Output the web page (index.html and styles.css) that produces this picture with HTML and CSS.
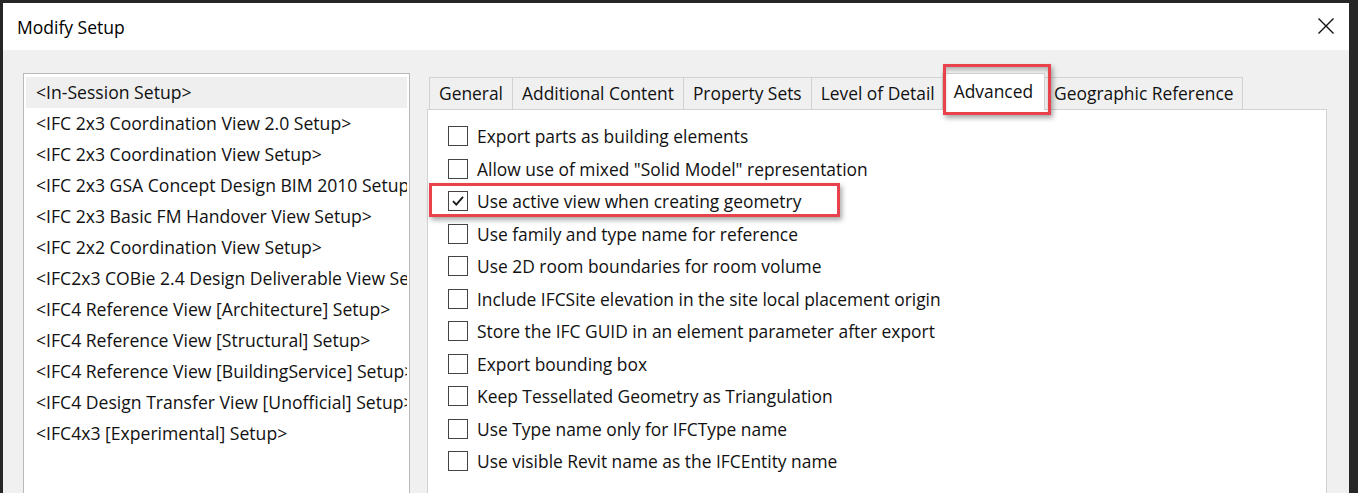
FILE: index.html
```html
<!DOCTYPE html>
<html>
<head>
<meta charset="utf-8">
<title>Modify Setup</title>
<link rel="stylesheet" href="styles.css">
</head>
<body>
<div class="window">
  <div class="titlebar">
    <span class="title">Modify Setup</span>
    <span class="close" aria-label="Close">
      <svg width="18" height="18" viewBox="0 0 18 18"><path d="M1.5 1.5 L16.5 16.5 M16.5 1.5 L1.5 16.5" stroke="#111" stroke-width="1.4" fill="none"/></svg>
    </span>
  </div>
  <div class="content">
    <div class="setup-list">
      <div class="item selected">&lt;In-Session Setup&gt;</div>
      <div class="item">&lt;IFC 2x3 Coordination View 2.0 Setup&gt;</div>
      <div class="item">&lt;IFC 2x3 Coordination View Setup&gt;</div>
      <div class="item">&lt;IFC 2x3 GSA Concept Design BIM 2010 Setup&gt;</div>
      <div class="item">&lt;IFC 2x3 Basic FM Handover View Setup&gt;</div>
      <div class="item">&lt;IFC 2x2 Coordination View Setup&gt;</div>
      <div class="item">&lt;IFC2x3 COBie 2.4 Design Deliverable View Setup&gt;</div>
      <div class="item">&lt;IFC4 Reference View [Architecture] Setup&gt;</div>
      <div class="item">&lt;IFC4 Reference View [Structural] Setup&gt;</div>
      <div class="item">&lt;IFC4 Reference View [BuildingService] Setup&gt;</div>
      <div class="item">&lt;IFC4 Design Transfer View [Unofficial] Setup&gt;</div>
      <div class="item">&lt;IFC4x3 [Experimental] Setup&gt;</div>
    </div>
    <div class="tabs-area">
      <div class="tabstrip">
        <div class="tab">General</div>
        <div class="tab">Additional Content</div>
        <div class="tab">Property Sets</div>
        <div class="tab">Level of Detail</div>
        <div class="tab active">Advanced<span class="highlight hl-tab"></span></div>
        <div class="tab">Geographic Reference</div>
      </div>
      <div class="panel">
        <div class="row"><span class="box"></span><span class="label">Export parts as building elements</span></div>
        <div class="row"><span class="box"></span><span class="label">Allow use of mixed "Solid Model" representation</span></div>
        <div class="row marked"><span class="box checked"><svg width="14" height="14" viewBox="0 0 14 14"><path d="M2 7.2 L5.3 10.6 L12 2.8" stroke="#1a1a1a" stroke-width="1.9" fill="none"/></svg></span><span class="label">Use active view when creating geometry</span><span class="highlight hl-row"></span></div>
        <div class="row"><span class="box"></span><span class="label">Use family and type name for reference</span></div>
        <div class="row"><span class="box"></span><span class="label">Use 2D room boundaries for room volume</span></div>
        <div class="row"><span class="box"></span><span class="label">Include IFCSite elevation in the site local placement origin</span></div>
        <div class="row"><span class="box"></span><span class="label">Store the IFC GUID in an element parameter after export</span></div>
        <div class="row"><span class="box"></span><span class="label">Export bounding box</span></div>
        <div class="row"><span class="box"></span><span class="label">Keep Tessellated Geometry as Triangulation</span></div>
        <div class="row"><span class="box"></span><span class="label">Use Type name only for IFCType name</span></div>
        <div class="row"><span class="box"></span><span class="label">Use visible Revit name as the IFCEntity name</span></div>
      </div>
    </div>
  </div>
</div>
</body>
</html>
```
FILE: styles.css
```css
* { box-sizing: border-box; }
html, body { margin: 0; padding: 0; }
body {
  background: #262626;
  width: 1358px;
  height: 493px;
  overflow: hidden;
  font-family: "Open Sans", "Noto Sans", "Liberation Sans", sans-serif;
  font-size: 17.4px;
  color: #111;
}
.window {
  margin: 3px 0 0 3px;
  width: 1346px;
  height: 490px;
  background: #f0f0f0;
  display: flex;
  flex-direction: column;
  overflow: hidden;
}
.titlebar {
  height: 47px;
  flex: none;
  background: #fff;
  display: flex;
  align-items: center;
  justify-content: space-between;
  padding: 0 14px 0 14px;
}
.title { font-size: 17.5px; color: #000; }
.close { display: flex; width: 18px; height: 18px; margin-top: -2px; }
.content {
  flex: 1;
  display: flex;
  gap: 17px;
  padding: 23px 0 0 20px;
  min-height: 0;
}
.setup-list {
  width: 387px;
  flex: none;
  background: #fff;
  border: 1px solid #b9b9b9;
  border-bottom: none;
  padding: 3px 2px 0 2px;
  overflow: hidden;
}
.item {
  height: 31px;
  line-height: 31px;
  padding-left: 10px;
  white-space: nowrap;
  overflow: hidden;
  font-size: 17.6px;
}
.item.selected { background: #efefef; }
.tabs-area {
  width: 900px;
  flex: none;
  display: flex;
  flex-direction: column;
}
.tabstrip {
  display: flex;
  align-items: flex-end;
  height: 36px;
  padding-left: 2px;
  position: relative;
  z-index: 1;
}
.tab {
  height: 32px;
  line-height: 30px;
  padding: 0 9px;
  background: #f0f0f0;
  border: 1px solid #d2d2d2;
  border-bottom: none;
  margin-right: -1px;
  white-space: nowrap;
}
.tab.active {
  position: relative;
  height: 37px;
  line-height: 34px;
  background: #fff;
  border-color: #d2d2d2;
  margin: 0 -1px -1px -2px;
  padding: 0 11px;
  z-index: 2;
}
.panel {
  flex: 1;
  background: #fff;
  border: 1px solid #d2d2d2;
  border-bottom: none;
  padding: 10px 0 0 20px;
}
.row {
  position: relative;
  display: flex;
  align-items: center;
  height: 32.5px;
}
.box {
  width: 20px;
  height: 20px;
  border: 1px solid #444;
  background: #fff;
  flex: none;
  display: flex;
  align-items: center;
  justify-content: center;
}
.label { margin-left: 9px; white-space: nowrap; }
.highlight {
  position: absolute;
  border: 3px solid #e8434d;
  box-shadow: 2px 3px 5px rgba(0,0,0,0.35);
  pointer-events: none;
}
.hl-row {
  left: -19px;
  top: -2px;
  width: 411px;
  height: 34px;
}
.hl-tab {
  left: 0px;
  top: -10px;
  width: 108px;
  height: 51px;
  box-shadow: 2px 3px 5px rgba(0,0,0,0.35), inset 0 4px 4px -1px rgba(0,0,0,0.25);
}
```
